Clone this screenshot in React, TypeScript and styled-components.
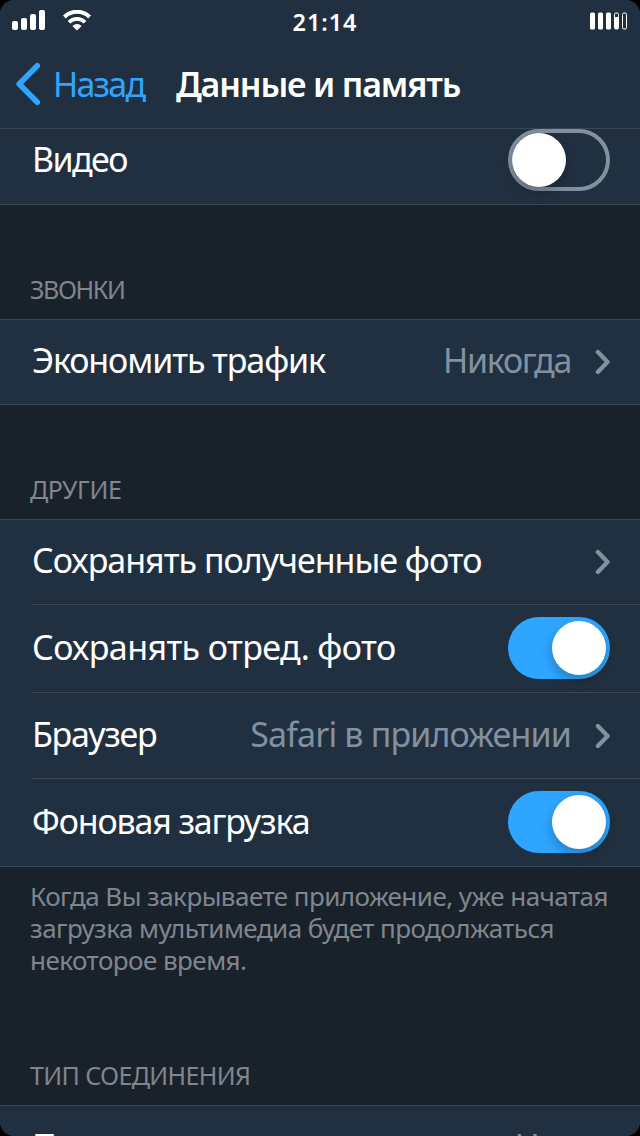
import React from 'react';
import styled, { createGlobalStyle } from 'styled-components';

const GlobalStyle = createGlobalStyle`
  * { box-sizing: border-box; }
  body { margin: 0; background: #000; }
`;

const Screen = styled.div`
  width: 640px;
  height: 1136px;
  overflow: hidden;
  display: flex;
  flex-direction: column;
  border-radius: 14px;
  background: #19222b;
  font-family: 'Noto Sans', 'Open Sans', sans-serif;
  color: #fff;
`;

const Header = styled.header`
  flex: none;
  height: 129px;
  background: #213040;
  border-bottom: 1px solid #3a4856;
`;

const StatusBar = styled.div`
  height: 44px;
  display: grid;
  grid-template-columns: 1fr auto 1fr;
  align-items: center;
  padding: 0 12px;
`;

const StatusIcons = styled.div`
  display: flex;
  align-items: flex-start;
  gap: 17px;
  padding-bottom: 4px;
`;

const Clock = styled.div`
  font-size: 23.5px;
  font-weight: 600;
  letter-spacing: 0.9px;
  line-height: 44px;
  padding-left: 10px;
`;

const Battery = styled.div`
  display: flex;
  justify-content: flex-end;
  padding-bottom: 3px;
`;

const NavBar = styled.nav`
  height: 80px;
  display: flex;
  align-items: center;
  padding-left: 16px;
`;

const BackButton = styled.a`
  display: flex;
  align-items: center;
  color: #2ea6ff;
`;

const BackLabel = styled.span`
  margin-left: 12px;
  width: 123px;
  font-size: 34px;
  line-height: 80px;
  letter-spacing: -1.8px;
`;

const Title = styled.h1`
  margin: 0;
  font-size: 34px;
  font-weight: 600;
  line-height: 80px;
  letter-spacing: -1.15px;
`;

const Group = styled.section`
  flex: none;
  background: #213040;
  border-top: 1px solid #3a4856;
  border-bottom: 1px solid #3a4856;
`;

const TopGroup = styled(Group)`
  border-top: none;
`;

const Row = styled.div<{ $height: number; $shift?: number }>`
  height: ${(p) => p.$height}px;
  margin-left: 32px;
  padding-right: 30px;
  padding-bottom: ${(p) => p.$shift ?? 0}px;
  display: flex;
  align-items: center;
  justify-content: space-between;

  & + & {
    border-top: 1px solid #3a4856;
  }
`;

const Label = styled.span<{ $spacing?: number; $lift?: number }>`
  font-size: 34px;
  line-height: 46px;
  letter-spacing: ${(p) => p.$spacing ?? -1}px;
  white-space: nowrap;
  padding-bottom: ${(p) => p.$lift ?? 3}px;
`;

const Detail = styled.span`
  display: flex;
  align-items: center;
  gap: 24px;
  color: #8191a1;
`;

const Track = styled.span<{ $on: boolean }>`
  width: 102px;
  height: 62px;
  border-radius: 31px;
  display: flex;
  align-items: center;
  justify-content: ${(p) => (p.$on ? 'flex-end' : 'flex-start')};
  padding: 0 ${(p) => (p.$on ? 4 : 0)}px;
  border: ${(p) => (p.$on ? 'none' : '4px solid #8191a1')};
  background: ${(p) => (p.$on ? '#2ea6ff' : 'transparent')};
`;

const Knob = styled.span`
  width: 54px;
  height: 54px;
  border-radius: 50%;
  background: #fff;
  box-shadow: 0 5px 12px rgba(0, 0, 0, 0.25);
`;

const SectionTitle = styled.h2<{ $height: number; $spacing: number }>`
  flex: none;
  height: ${(p) => p.$height}px;
  margin: 0;
  padding: 0 30px 12px;
  display: flex;
  align-items: flex-end;
  font-size: 25px;
  font-weight: 400;
  line-height: 36px;
  letter-spacing: ${(p) => p.$spacing}px;
  text-transform: uppercase;
  color: #80858e;
`;

const Note = styled.p`
  flex: none;
  margin: 0;
  padding: 13px 20px 0 30px;
  font-size: 26px;
  line-height: 32px;
  letter-spacing: -0.54px;
  color: #80858e;
  white-space: pre-line;
`;

const SignalIcon = () => (
  <svg width="34" height="21" viewBox="0 0 34 21" fill="#fff">
    <rect x="0" y="11" width="6" height="9" rx="2" />
    <rect x="9" y="8" width="6" height="12" rx="2" />
    <rect x="18" y="4" width="6" height="16" rx="2" />
    <rect x="27" y="0" width="6" height="20" rx="2" />
  </svg>
);

const WifiIcon = () => (
  <svg width="28" height="21" viewBox="0 0 28 21" fill="none" stroke="#fff">
    <path d="M1.4 7 A17.8 17.8 0 0 1 26.6 7" strokeWidth="4" />
    <path d="M6 12.3 A11 11 0 0 1 22 12.3" strokeWidth="3.7" />
    <path d="M9.4 15.9 A6.4 6.4 0 0 1 18.6 15.9 L14 20.4 Z" fill="#fff" stroke="none" />
  </svg>
);

const BatteryIcon = () => (
  <svg width="38" height="18" viewBox="0 0 38 18" fill="#fff">
    <rect x="0" y="0.5" width="5" height="17" rx="1.6" />
    <rect x="8" y="0.5" width="5" height="17" rx="1.6" />
    <rect x="16" y="0.5" width="5" height="17" rx="1.6" />
    <rect x="24.5" y="1" width="4" height="16" rx="1.3" fill="none" stroke="#fff" />
    <rect x="24.5" y="5" width="4" height="12" rx="1" />
    <rect x="32.5" y="1" width="4" height="16" rx="1.3" fill="none" stroke="#fff" />
  </svg>
);

const BackIcon = () => (
  <svg width="25" height="44" viewBox="0 0 25 44" fill="none" stroke="#2ea6ff" strokeWidth="5.6" strokeLinecap="round" strokeLinejoin="round">
    <path d="M21.3 3.8 L3.2 22 L21.3 40.2" />
  </svg>
);

const Chevron = () => (
  <svg width="15" height="26" viewBox="0 0 15 26" fill="none" stroke="#8191a1" strokeWidth="4.3" strokeLinecap="round" strokeLinejoin="round">
    <path d="M2.9 3 L12.6 13 L2.9 23" />
  </svg>
);

const Toggle = ({ on }: { on: boolean }) => (
  <Track $on={on}>
    <Knob />
  </Track>
);

export default function App() {
  return (
    <>
      <GlobalStyle />
      <Screen>
        <Header>
          <StatusBar>
            <StatusIcons>
              <SignalIcon />
              <WifiIcon />
            </StatusIcons>
            <Clock>21:14</Clock>
            <Battery>
              <BatteryIcon />
            </Battery>
          </StatusBar>
          <NavBar>
            <BackButton>
              <BackIcon />
              <BackLabel>Назад</BackLabel>
            </BackButton>
            <Title>Данные и память</Title>
          </NavBar>
        </Header>

        <TopGroup>
          <Row $height={75} $shift={13}>
            <Label $spacing={-1.6} $lift={2}>Видео</Label>
            <Toggle on={false} />
          </Row>
        </TopGroup>

        <SectionTitle $height={114} $spacing={-1.4}>Звонки</SectionTitle>
        <Group>
          <Row $height={84}>
            <Label $spacing={-1.1} $lift={5}>Экономить трафик</Label>
            <Detail>
              <Label $spacing={-1.3} $lift={5}>Никогда</Label>
              <Chevron />
            </Detail>
          </Row>
        </Group>

        <SectionTitle $height={114} $spacing={-0.4}>Другие</SectionTitle>
        <Group>
          <Row $height={84}>
            <Label $spacing={-1} $lift={5}>Сохранять полученные фото</Label>
            <Chevron />
          </Row>
          <Row $height={88} $shift={2}>
            <Label $spacing={-0.62} $lift={1}>Сохранять отред. фото</Label>
            <Toggle on />
          </Row>
          <Row $height={86}>
            <Label $spacing={-1.3}>Браузер</Label>
            <Detail>
              <Label $spacing={-0.85}>Safari в приложении</Label>
              <Chevron />
            </Detail>
          </Row>
          <Row $height={88} $shift={2}>
            <Label $spacing={-1.15} $lift={1}>Фоновая загрузка</Label>
            <Toggle on />
          </Row>
        </Group>
        <Note>
          {'Когда Вы закрываете приложение, уже начатая\nзагрузка мультимедиа будет продолжаться\nнекоторое время.'}
        </Note>

        <SectionTitle $height={129} $spacing={-0.62}>Тип соединения</SectionTitle>
        <Group>
          <Row $height={84}>
            <Label $spacing={-1.2} $lift={5}>Прокси</Label>
            <Detail>
              <Label $lift={5}>Нет</Label>
              <Chevron />
            </Detail>
          </Row>
        </Group>
      </Screen>
    </>
  );
}
